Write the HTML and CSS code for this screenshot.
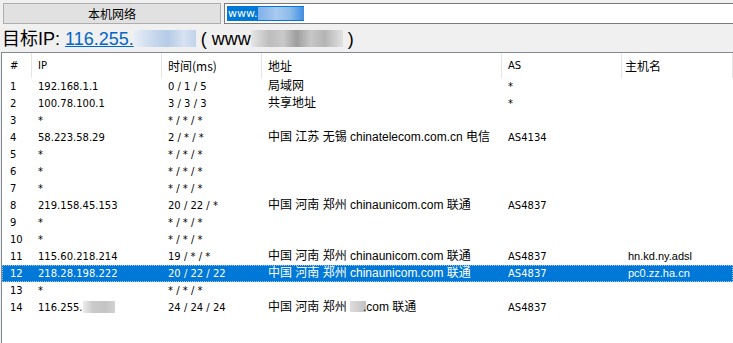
FILE: index.html
```html
<!DOCTYPE HTML>
<html>
<head>
<link rel="stylesheet" href="styles.css">
<meta charset='utf-8'>
<title>路由追踪</title>
</head>
<body>
  <div class="barra">
    <button class="boton">本机网络</button>
    <div class="entrada"><span class="sel">www.<span class="blur azul"></span></span></div>
  </div>
  <div class="destino">目标IP: <a class="enlace" href="#">116.255.<span class="blur celeste"></span></a> ( www<span class="blur gris"></span> )</div>
  <div class="lista">
    <div class="fila cab">
      <div class="c num">#</div><div class="c ip">IP</div><div class="c cjk">时间(ms)</div><div class="c cjk">地址</div><div class="c ip">AS</div><div class="c cjk">主机名</div>
    </div>
    <div class="fila">
      <div class="c num">1</div><div class="c ip">192.168.1.1</div><div class="c ip">0 / 1 / 5</div><div class="c cjk">局域网</div><div class="c ip">*</div><div class="c cjk"></div>
    </div>
    <div class="fila">
      <div class="c num">2</div><div class="c ip">100.78.100.1</div><div class="c ip">3 / 3 / 3</div><div class="c cjk">共享地址</div><div class="c ip">*</div><div class="c cjk"></div>
    </div>
    <div class="fila">
      <div class="c num">3</div><div class="c ip">*</div><div class="c ip">* / * / *</div><div class="c cjk"></div><div class="c ip"></div><div class="c cjk"></div>
    </div>
    <div class="fila">
      <div class="c num">4</div><div class="c ip">58.223.58.29</div><div class="c ip">2 / * / *</div><div class="c cjk">中国 江苏 无锡 chinatelecom.com.cn 电信</div><div class="c ip">AS4134</div><div class="c cjk"></div>
    </div>
    <div class="fila">
      <div class="c num">5</div><div class="c ip">*</div><div class="c ip">* / * / *</div><div class="c cjk"></div><div class="c ip"></div><div class="c cjk"></div>
    </div>
    <div class="fila">
      <div class="c num">6</div><div class="c ip">*</div><div class="c ip">* / * / *</div><div class="c cjk"></div><div class="c ip"></div><div class="c cjk"></div>
    </div>
    <div class="fila">
      <div class="c num">7</div><div class="c ip">*</div><div class="c ip">* / * / *</div><div class="c cjk"></div><div class="c ip"></div><div class="c cjk"></div>
    </div>
    <div class="fila">
      <div class="c num">8</div><div class="c ip">219.158.45.153</div><div class="c ip">20 / 22 / *</div><div class="c cjk">中国 河南 郑州 chinaunicom.com 联通</div><div class="c ip">AS4837</div><div class="c cjk"></div>
    </div>
    <div class="fila">
      <div class="c num">9</div><div class="c ip">*</div><div class="c ip">* / * / *</div><div class="c cjk"></div><div class="c ip"></div><div class="c cjk"></div>
    </div>
    <div class="fila">
      <div class="c num">10</div><div class="c ip">*</div><div class="c ip">* / * / *</div><div class="c cjk"></div><div class="c ip"></div><div class="c cjk"></div>
    </div>
    <div class="fila">
      <div class="c num">11</div><div class="c ip">115.60.218.214</div><div class="c ip">19 / * / *</div><div class="c cjk">中国 河南 郑州 chinaunicom.com 联通</div><div class="c ip">AS4837</div><div class="c cjk host">hn.kd.ny.adsl</div>
    </div>
    <div class="fila activa">
      <div class="c num">12</div><div class="c ip">218.28.198.222</div><div class="c ip">20 / 22 / 22</div><div class="c cjk">中国 河南 郑州 chinaunicom.com 联通</div><div class="c ip">AS4837</div><div class="c cjk host">pc0.zz.ha.cn</div>
    </div>
    <div class="fila">
      <div class="c num">13</div><div class="c ip">*</div><div class="c ip">* / * / *</div><div class="c cjk"></div><div class="c ip"></div><div class="c cjk"></div>
    </div>
    <div class="fila">
      <div class="c num">14</div><div class="c ip">116.255.<span class="blur gris corto"></span></div><div class="c ip">24 / 24 / 24</div><div class="c cjk">中国 河南 郑州 <span class="blur gris mini"></span>.com 联通</div><div class="c ip">AS4837</div><div class="c cjk"></div>
    </div>
  </div>
</body>
</html>
```

FILE: styles.css
```css
html,body{
  margin: 0;
  height: 100%;
  overflow: hidden;
  background: #f0f0f0;
  font-family: "Noto Sans CJK SC", sans-serif;
  color: #000;
}
.barra{
  display: flex;
  gap: 3px;
  padding: 3px 0 0 3px;
  height: 21px;
}
.boton{
  width: 218px;
  height: 21px;
  margin: 0;
  padding: 0;
  background: #e1e1e1;
  border: 1px solid #adadad;
  font-family: "Noto Sans CJK SC", sans-serif;
  font-size: 12px;
  line-height: 19px;
}
.entrada{
  flex: 1;
  height: 19px;
  background: #fff;
  border: 1px solid #7a7a7a;
  border-right: none;
  display: flex;
  align-items: center;
  padding-left: 2px;
}
.sel{
  display: flex;
  align-items: center;
  height: 15px;
  background: #0078d7;
  color: #fff;
  font-family: "DejaVu Sans", sans-serif;
  font-size: 11px;
  padding-left: 1px;
}
.blur{
  display: inline-block;
  vertical-align: middle;
}
.azul{
  width: 46px;
  height: 13px;
  margin-left: 1px;
  background: linear-gradient(90deg, #7fb0e8, #a9c9f0 40%, #8dbbea 70%, #3f8ee0);
}
.celeste{
  width: 62px;
  height: 17px;
  margin-top: -3px;
  background: linear-gradient(90deg, #e7eef7, #c9d9ee 30%, #b5cbe7 55%, #d6e2f1 80%, #c1d3ec);
}
.gris{
  width: 92px;
  height: 17px;
  margin-top: -3px;
  background: linear-gradient(90deg, #e6e6e6, #bdbdbd 20%, #c9c9c9 35%, #9e9e9e 50%, #c7c7c7 65%, #b4b4b4 80%, #e2e2e2);
}
.gris.corto{
  width: 32px;
  height: 12px;
  margin-top: -2px;
  background: linear-gradient(90deg, #ececec, #cacaca 30%, #c4c4c4 70%, #d2d2d2);
}
.gris.mini{
  width: 16px;
  height: 11px;
  margin: -2px -3px 0 0;
  background: linear-gradient(90deg, #dcdcdc, #c2c2c2);
}
.destino{
  height: 28px;
  padding-left: 2px;
  font-family: "Liberation Sans", "Noto Sans CJK SC", sans-serif;
  font-size: 18px;
  line-height: 30px;
  white-space: nowrap;
}
.enlace{
  color: #0066cc;
}
.lista{
  margin-left: 1px;
  height: 400px;
  background: #fff;
  border: 1px solid #828790;
  border-right: none;
}
.fila{
  display: grid;
  grid-template-columns: 30px 130px 100px 240px 120px 1fr;
  height: 17px;
  line-height: 17px;
  white-space: nowrap;
}
.cab{
  height: 25px;
  line-height: 25px;
}
.cab .c{
  border-right: 1px solid #e5e5e5;
}
.c{
  padding-left: 6px;
  overflow: hidden;
}
.num{
  padding-left: 8px;
  font-family: "DejaVu Sans", sans-serif;
  font-size: 10px;
}
.ip{
  font-family: "DejaVu Sans", sans-serif;
  font-size: 10px;
}
.cjk{
  font-family: "Liberation Sans", "Noto Sans CJK SC", sans-serif;
  font-size: 12px;
}
.cab .cjk{
  font-family: "Noto Sans CJK SC", sans-serif;
}
.cab .c:last-child{
  padding-left: 3px;
}
.host{
  font-size: 11px;
}
.activa{
  background: #0078d7;
  color: #fff;
  outline: 1px dotted #9cc6ee;
  outline-offset: -1px;
}
```
